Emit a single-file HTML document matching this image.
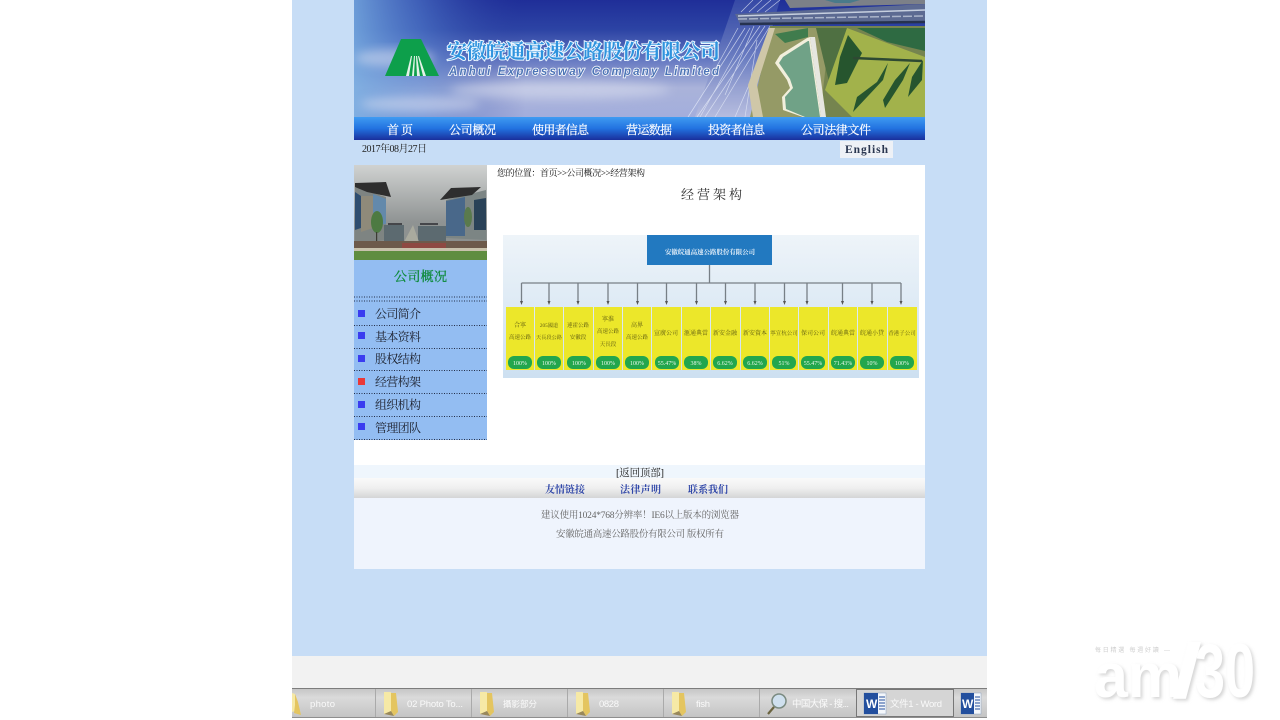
<!DOCTYPE html>
<html lang="zh"><head><meta charset="utf-8"><title>经营架构</title>
<style>html,body{margin:0;padding:0;background:#fff;width:1280px;height:720px;overflow:hidden}svg{display:block}
text{font-family:"Liberation Serif","Noto Serif CJK SC",serif}
.a{font-family:"Liberation Sans","Noto Sans CJK SC",sans-serif}</style></head><body>
<svg width="1280" height="720" viewBox="0 0 1280 720" xmlns="http://www.w3.org/2000/svg">
<defs>
<linearGradient id="sky" x1="0" y1="0" x2="0" y2="1"><stop offset="0" stop-color="#1f2e98"/><stop offset=".25" stop-color="#2c43a4"/><stop offset=".5" stop-color="#6276c0"/><stop offset=".75" stop-color="#aab3da"/><stop offset="1" stop-color="#a3aedc"/></linearGradient>
<linearGradient id="skyL" x1="0" y1="0" x2="1" y2="0"><stop offset="0" stop-color="#79aee2" stop-opacity=".85"/><stop offset=".12" stop-color="#5a8ad4" stop-opacity=".5"/><stop offset=".3" stop-color="#27399c" stop-opacity="0"/></linearGradient>
<linearGradient id="road" x1="0" y1="0" x2="0" y2="1"><stop offset="0" stop-color="#3a4ea8"/><stop offset=".5" stop-color="#6d7fc2"/><stop offset="1" stop-color="#b9bfdf"/></linearGradient>
<linearGradient id="nav" x1="0" y1="0" x2="0" y2="1"><stop offset="0" stop-color="#3f9bf2"/><stop offset=".5" stop-color="#2272e0"/><stop offset="1" stop-color="#1a2f9c"/></linearGradient>
<linearGradient id="photo" x1="0" y1="0" x2="0" y2="1"><stop offset="0" stop-color="#d0d2d1"/><stop offset=".6" stop-color="#8f9393"/><stop offset="1" stop-color="#8a8f8c"/></linearGradient>
<linearGradient id="org" x1="0" y1="0" x2="0" y2="1"><stop offset="0" stop-color="#eef4f9"/><stop offset="1" stop-color="#cde0f1"/></linearGradient>
<linearGradient id="foot" x1="0" y1="0" x2="0" y2="1"><stop offset="0" stop-color="#fafafa"/><stop offset=".5" stop-color="#efefef"/><stop offset="1" stop-color="#d4d5d6"/></linearGradient>
<linearGradient id="task" x1="0" y1="0" x2="0" y2="1"><stop offset="0" stop-color="#c6c6c6"/><stop offset=".3" stop-color="#dadada"/><stop offset="1" stop-color="#c4c4c4"/></linearGradient>
<filter id="b1"><feGaussianBlur stdDeviation=".7"/></filter>
<filter id="b2"><feGaussianBlur stdDeviation=".35"/></filter>
<filter id="b3"><feGaussianBlur stdDeviation="5"/></filter>
<filter id="wm" x="-10%" y="-10%" width="125%" height="125%"><feDropShadow dx="2" dy="2" stdDeviation="1.500" flood-color="#c4c4c4" flood-opacity=".7"/></filter>
<clipPath id="hd"><rect x="354" y="0" width="571" height="117"/></clipPath>
<clipPath id="ph"><rect x="354" y="165" width="133" height="95"/></clipPath>
</defs>
<rect x="292" y="0" width="695" height="656" fill="#c7ddf6"/>
<rect x="292" y="656" width="695" height="32" fill="#f2f2f2"/>

<!-- header -->
<g clip-path="url(#hd)">
<rect x="354" y="0" width="571" height="117" fill="url(#sky)"/>
<rect x="354" y="0" width="571" height="117" fill="url(#skyL)"/>
<g filter="url(#b3)" fill="#dfe3f2" opacity=".5"><ellipse cx="395" cy="58" rx="40" ry="9"/><ellipse cx="560" cy="90" rx="110" ry="9"/><ellipse cx="420" cy="104" rx="60" ry="8"/></g>
<g filter="url(#b2)">
<path d="M735 0L780 0L772 28L752 117L695 117Z" fill="url(#road)" opacity=".85"/>
<g stroke="#e6ebf8" stroke-width=".7" opacity=".75" fill="none">
<path d="M770 26L715 117M765 26L705 117M760 26L697 117M754 26L725 95M775 26L735 117M745 28L688 117M750 28L700 117M757 40L745 117M767 38L752 100M738 28L712 75M780 0L765 12M771 0L757 12M762 0L749 12M753 0L741 12"/></g>
<path d="M770 26L925 26L925 117L752 117Z" fill="#74844f"/>
<path d="M772 28L830 28L820 117L750 117Z" fill="#959a66"/>
<path d="M769 28L775 28L757 85L763 117L753 117L748 85Z" fill="#cfc7a8"/>
<path d="M775 34L808 28L808 37L785 43Z" fill="#3f7c4d"/>
<path d="M816 28L847 28L830 85L826 70Z" fill="#4f6f42"/>
<path d="M847 28L825 90L852 117L925 117L925 57L887 43Z" fill="#a2b24c"/>
<path d="M857 28L925 28L925 51L887 42Z" fill="#2f6b43"/>
<path d="M807 38L780 55L775 63L787 80L790 88L782 97L783 110L803 117L821 117L810 37Z" fill="#f2efdc"/>
<path d="M808 41L783 57L779 63L790 79L793 88L785 97L786 109L805 117L820 117L809 41Z" fill="#6fa287"/>
<path d="M810 37L815 37L826 117L821 117Z" fill="#e6e6e0"/>
<g fill="#26552f"><path d="M848 35L862 53L847 83L835 85L840 57Z"/><path d="M888 63L883 80L853 112L857 97L877 82Z"/><path d="M910 63L903 80L885 108L883 100L895 80Z"/><path d="M923 60L922 80L908 97L912 77Z"/></g>
<path d="M853 58L922 61" stroke="#2f4a33" stroke-width="2.500"/>
<path d="M735 14L925 4L925 23L740 24Z" fill="#5c6a92"/>
<path d="M738 16L925 10" stroke="#c6cfdf" stroke-width="1.500"/>
<path d="M738 19L925 16" stroke="#aab4ca" stroke-width="1.500" stroke-dasharray="9 2"/>
<path d="M740 24L925 22" stroke="#27334f" stroke-width="2.500"/>
<path d="M785 0L925 0L925 4L850 6L790 8Z" fill="#7c8088"/>
<path d="M825 0L860 0L850 3L835 3Z" fill="#487a8a"/>
</g>
</g>
<!-- logo -->
<g filter="url(#b2)"><path d="M401 39L421 39L439 76L385 76Z" fill="#0f9f4c"/><path d="M406 76L411 56L412 56L409 76M412 76L414 56L415 56L414 76M417 76L416 56L417 56L420 76M423 76L418 56L419 56L426 76" fill="#e4f3e8"/></g>
<text x="447" y="58" font-size="20" font-weight="bold" textLength="273" fill="#2f93de" stroke="#e9f5ff" stroke-width="2" paint-order="stroke" filter="url(#b2)">安徽皖通高速公路股份有限公司</text>
<text class="a" x="449" y="75" font-size="11.500" font-weight="bold" font-style="italic" textLength="270" fill="#4d74b6" stroke="#fff" stroke-width="1.500" paint-order="stroke" filter="url(#b2)">Anhui Expressway Company Limited</text>

<!-- nav -->
<rect x="354" y="117" width="571" height="23" fill="url(#nav)"/>
<g fill="#fff" font-size="12" filter="url(#b2)" stroke="#fff" stroke-width=".2">
<text x="387" y="134" textLength="26">首 页</text>
<text x="449" y="134" textLength="47">公司概况</text>
<text x="532" y="134" textLength="57">使用者信息</text>
<text x="626" y="134" textLength="46">营运数据</text>
<text x="708" y="134" textLength="57">投资者信息</text>
<text x="801" y="134" textLength="70">公司法律文件</text>
</g>
<text x="362" y="152" font-size="10" textLength="65" fill="#222">2017年08月27日</text>
<rect x="840" y="141" width="53" height="17" fill="#eef1f6"/>
<text x="845" y="153" font-size="11.500" font-weight="bold" textLength="43" fill="#2a3650">English</text>

<!-- main -->
<rect x="487" y="165" width="438" height="300" fill="#fff"/>
<rect x="354" y="440" width="133" height="25" fill="#fff"/>

<!-- side photo -->
<g clip-path="url(#ph)">
<rect x="354" y="165" width="133" height="95" fill="url(#photo)"/>
<g filter="url(#b2)">
<path d="M355 187L386 197L386 240L355 244Z" fill="#7e8482"/>
<path d="M355 192L361 196L361 228L355 230Z" fill="#2f4e70"/>
<path d="M373 194L386 199L386 224L373 226Z" fill="#6389ab"/>
<path d="M361 196L373 196L373 228L361 232Z" fill="#8f8a7a"/>
<path d="M355 183L386 182L391 197L367 192L355 187Z" fill="#2d2d2e"/>
<path d="M446 200L486 190L486 240L446 238Z" fill="#7c8584"/>
<path d="M446 201L465 197L465 236L446 236Z" fill="#48688a"/>
<path d="M474 200L486 198L486 230L474 230Z" fill="#2c4258"/>
<path d="M440 200L451 188L481 187L472 195Z" fill="#2d2d2e"/>
<path d="M384 225L404 225L404 242L384 242ZM418 226L446 226L446 242L418 242Z" fill="#5b6a70"/>
<path d="M388 224L402 224M420 224L438 224" stroke="#2f2f30" stroke-width="1.500"/>
<path d="M404 242L413 225L419 242Z" fill="#a9aa9e"/>
<ellipse cx="377" cy="222" rx="6" ry="11" fill="#4d7a42"/><rect x="376" y="232" width="1.200" height="16" fill="#3a3a30"/>
<ellipse cx="468" cy="217" rx="4" ry="10" fill="#5a7a4d"/>
<rect x="354" y="241" width="133" height="8" fill="#6d5a4c"/>
<rect x="402" y="243" width="44" height="5" fill="#8e4842"/>
<rect x="354" y="248" width="133" height="3" fill="#c8c2ac"/>
<rect x="354" y="251" width="133" height="9" fill="#5e8d3f"/>
</g></g>
<rect x="354" y="260" width="133" height="180" fill="#93bdf2"/>
<text x="394" y="281" font-size="13" textLength="53" fill="#0d8a3a" stroke="#0d8a3a" stroke-width=".3">公司概况</text>
<g stroke="#24304a" stroke-width="1" stroke-dasharray="1 1.500">
<path d="M354 297H487M354 301H487M354 325.500H487M354 348.500H487M354 370.500H487M354 393.500H487M354 416.500H487M354 439.500H487"/></g>
<g fill="#3a3cf0"><rect x="358" y="310" width="7" height="7"/><rect x="358" y="332" width="7" height="7"/><rect x="358" y="355" width="7" height="7"/><rect x="358" y="401" width="7" height="7"/><rect x="358" y="423" width="7" height="7"/></g>
<rect x="358" y="378" width="7" height="7" fill="#ea3838"/>
<g font-size="12" fill="#1a1f2a" filter="url(#b2)">
<text x="375" y="318" textLength="46">公司简介</text>
<text x="375" y="341" textLength="46">基本资料</text>
<text x="375" y="363" textLength="46">股权结构</text>
<text x="375" y="386" textLength="46">经营构架</text>
<text x="375" y="409" textLength="46">组织机构</text>
<text x="375" y="432" textLength="46">管理团队</text>
</g>

<!-- breadcrumb, title -->
<text x="497" y="176" font-size="9" textLength="148" fill="#111">您的位置：首页&gt;&gt;公司概况&gt;&gt;经营架构</text>
<text x="681" y="199" font-size="13" textLength="61" fill="#333" filter="url(#b2)">经营架构</text>

<!-- org chart -->
<rect x="503" y="235" width="416" height="143" fill="url(#org)"/>
<g filter="url(#b2)">
<rect x="647" y="235" width="125" height="30" fill="#2479c0"/>
<text x="665" y="254" font-size="6.400" font-weight="bold" textLength="90" fill="#e8f2fa">安徽皖通高速公路股份有限公司</text>
<path d="M709.500 265V283M521.500 283H901M521.500 283V301M549 283V301M578 283V301M608 283V301M637.500 283V301M666.500 283V301M696.500 283V301M725.500 283V301M755 283V301M784.500 283V301M807 283V301M842.500 283V301M872 283V301M901 283V301" stroke="#777f86" stroke-width="1.300" fill="none"/>
<path d="M520 301h3l-1.500 4zM547.500 301h3l-1.500 4zM576.500 301h3l-1.500 4zM606.500 301h3l-1.500 4zM636 301h3l-1.500 4zM665 301h3l-1.500 4zM695 301h3l-1.500 4zM724 301h3l-1.500 4zM753.500 301h3l-1.500 4zM783 301h3l-1.500 4zM805.500 301h3l-1.500 4zM841 301h3l-1.500 4zM870.500 301h3l-1.500 4zM899.500 301h3l-1.500 4z" fill="#555"/>
<g fill="#ece72c">
<rect x="506" y="307" width="28" height="63"/><rect x="535" y="307" width="28" height="63"/><rect x="564" y="307" width="29" height="63"/><rect x="594" y="307" width="28" height="63"/><rect x="623" y="307" width="28" height="63"/><rect x="652" y="307" width="29" height="63"/><rect x="682" y="307" width="28" height="63"/><rect x="711" y="307" width="29" height="63"/><rect x="741" y="307" width="28" height="63"/><rect x="770" y="307" width="28" height="63"/><rect x="799" y="307" width="29" height="63"/><rect x="829" y="307" width="28" height="63"/><rect x="858" y="307" width="29" height="63"/><rect x="888" y="307" width="29" height="63"/>
</g>
<g fill="#22a64e">
<rect x="508" y="356" width="24" height="13" rx="6"/><rect x="537" y="356" width="24" height="13" rx="6"/><rect x="567" y="356" width="24" height="13" rx="6"/><rect x="596" y="356" width="24" height="13" rx="6"/><rect x="625" y="356" width="24" height="13" rx="6"/><rect x="655" y="356" width="24" height="13" rx="6"/><rect x="684" y="356" width="24" height="13" rx="6"/><rect x="713" y="356" width="24" height="13" rx="6"/><rect x="743" y="356" width="24" height="13" rx="6"/><rect x="772" y="356" width="24" height="13" rx="6"/><rect x="801" y="356" width="24" height="13" rx="6"/><rect x="831" y="356" width="24" height="13" rx="6"/><rect x="860" y="356" width="24" height="13" rx="6"/><rect x="890" y="356" width="24" height="13" rx="6"/>
</g>
<g font-size="6" fill="#5d5a10" text-anchor="middle">
<text x="520" y="327">合寧</text><text x="520" y="339" font-size="5.500">高速公路</text>
<text x="549" y="327" font-size="5.200">205國道</text><text x="549" y="339" font-size="5.200">天長段公路</text>
<text x="578" y="327" font-size="5.500">連霍公路</text><text x="578" y="339" font-size="5.500">安徽段</text>
<text x="608" y="321">寧淮</text><text x="608" y="333" font-size="5.500">高速公路</text><text x="608" y="346" font-size="5.500">天長段</text>
<text x="637" y="327">高界</text><text x="637" y="339" font-size="5.500">高速公路</text>
<text x="666" y="335">宣廣公司</text>
<text x="696" y="335">滙通典當</text>
<text x="725" y="335">新安金融</text>
<text x="755" y="335">新安資本</text>
<text x="784" y="335" font-size="5.500">寧宣杭公司</text>
<text x="813" y="335">保司公司</text>
<text x="843" y="335">皖通典當</text>
<text x="872" y="335">皖通小貸</text>
<text x="902" y="335" font-size="5.500">香港子公司</text>
</g>
<g font-size="6" fill="#e8f7ea" text-anchor="middle">
<text x="520" y="365">100%</text><text x="549" y="365">100%</text><text x="579" y="365">100%</text><text x="608" y="365">100%</text><text x="637" y="365">100%</text><text x="667" y="365">55.47%</text><text x="696" y="365">38%</text><text x="725" y="365">6.62%</text><text x="755" y="365">6.62%</text><text x="784" y="365">51%</text><text x="813" y="365">55.47%</text><text x="843" y="365">71.43%</text><text x="872" y="365">10%</text><text x="902" y="365">100%</text>
</g>
</g>

<!-- footer -->
<rect x="354" y="465" width="571" height="13" fill="#eff6fd"/>
<text x="616" y="476" font-size="10.500" textLength="48" fill="#222">[返回顶部]</text>
<rect x="354" y="478" width="571" height="20" fill="url(#foot)"/>
<g font-size="10" font-weight="bold" fill="#2f46a8">
<text x="545" y="493" textLength="40">友情链接</text>
<text x="620" y="493" textLength="41">法律声明</text>
<text x="688" y="493" textLength="40">联系我们</text>
</g>
<rect x="354" y="498" width="571" height="71" fill="#eff4fd"/>
<g font-size="9.500" fill="#666" filter="url(#b2)">
<text x="541" y="518" textLength="198">建议使用1024*768分辨率！IE6以上版本的浏览器</text>
<text x="556" y="537" textLength="168">安徽皖通高速公路股份有限公司 版权所有</text>
</g>

<!-- taskbar -->
<rect x="292" y="688" width="695" height="1" fill="#7d7d7d"/>
<rect x="292" y="689" width="695" height="28" fill="url(#task)"/>
<rect x="292" y="717" width="695" height="1" fill="#8e8e8e"/>
<path d="M375.500 689V717M471.500 689V717M567.500 689V717M663.500 689V717M759.500 689V717M953.500 689V717" stroke="#aaa"/>
<rect x="856.500" y="689.500" width="97" height="27" fill="#d5d5d5" stroke="#777"/>
<g filter="url(#b2)">
<path d="M292 693L295 694L295 711L292 712Z" fill="#f6e9a6"/><path d="M295 694L298 702L301 715L294 713L295 705Z" fill="#e4c560"/>
<path d="M384 692L391 692L391 712L384 714Z" fill="#f6e9a6"/><path d="M391 693L396 693L398 712L394 716L391 711Z" fill="#e4c560"/><path d="M384 714L391 711L394 716Z" fill="#99885a"/>
<path d="M480 692L487 692L487 712L480 714Z" fill="#f6e9a6"/><path d="M487 693L492 693L494 712L490 716L487 711Z" fill="#e4c560"/><path d="M480 714L487 711L490 716Z" fill="#99885a"/>
<path d="M576 692L583 692L583 712L576 714Z" fill="#f6e9a6"/><path d="M583 693L588 693L590 712L586 716L583 711Z" fill="#e4c560"/><path d="M576 714L583 711L586 716Z" fill="#99885a"/>
<path d="M672 692L679 692L679 712L672 714Z" fill="#f6e9a6"/><path d="M679 693L684 693L686 712L682 716L679 711Z" fill="#e4c560"/><path d="M672 714L679 711L682 716Z" fill="#99885a"/>
</g>
<circle cx="779" cy="701" r="7" fill="#cfe0ee" stroke="#7a8a80" stroke-width="1.500"/>
<path d="M774 707L768 714" stroke="#6b6440" stroke-width="2.200"/>
<g>
<rect x="864" y="693" width="22" height="21" fill="#f4f7fb" stroke="#8aa0c0" stroke-width=".5"/>
<rect x="864" y="693" width="14" height="21" fill="#234f9e"/>
<text class="a" x="866" y="708" font-size="12" font-weight="bold" fill="#fff">W</text>
<path d="M879 697H885M879 700H885M879 703H885M879 706H885M879 709H885" stroke="#234f9e"/>
<rect x="961" y="693" width="20" height="21" fill="#f4f7fb" stroke="#8aa0c0" stroke-width=".5"/>
<rect x="961" y="693" width="13" height="21" fill="#234f9e"/>
<text class="a" x="962" y="708" font-size="12" font-weight="bold" fill="#fff">W</text>
<path d="M975 697H980M975 700H980M975 703H980M975 706H980M975 709H980" stroke="#234f9e"/>
</g>
<g class="a" font-size="9.500" fill="#fafafa" filter="url(#b2)">
<text class="a" x="310" y="707" textLength="25">photo</text>
<text class="a" x="407" y="707" textLength="56">02 Photo To...</text>
<text class="a" x="503" y="707" textLength="34" font-size="8.500">攝影部分</text>
<text class="a" x="599" y="707" textLength="20">0828</text>
<text class="a" x="696" y="707" textLength="14">fish</text>
<text class="a" x="792" y="707" textLength="57">中国大保 - 搜...</text>
<text class="a" x="890" y="707" textLength="52">文件1 - Word</text>
</g>

<!-- watermark -->
<g class="a" filter="url(#wm)" fill="#fff" font-weight="bold">
<text class="a" x="1094" y="697" font-size="62" textLength="88" lengthAdjust="spacingAndGlyphs">am</text>
<text class="a" x="1172" y="697" font-size="76" textLength="30" lengthAdjust="spacingAndGlyphs">/</text>
<text class="a" x="1195" y="697" font-size="76" textLength="60" lengthAdjust="spacingAndGlyphs">30</text>
</g>
<text class="a" x="1095" y="652" font-size="6" textLength="75" fill="#cfcfcf" filter="url(#b2)">每日精選 每週好讀 —</text>
</svg>
</body></html>
